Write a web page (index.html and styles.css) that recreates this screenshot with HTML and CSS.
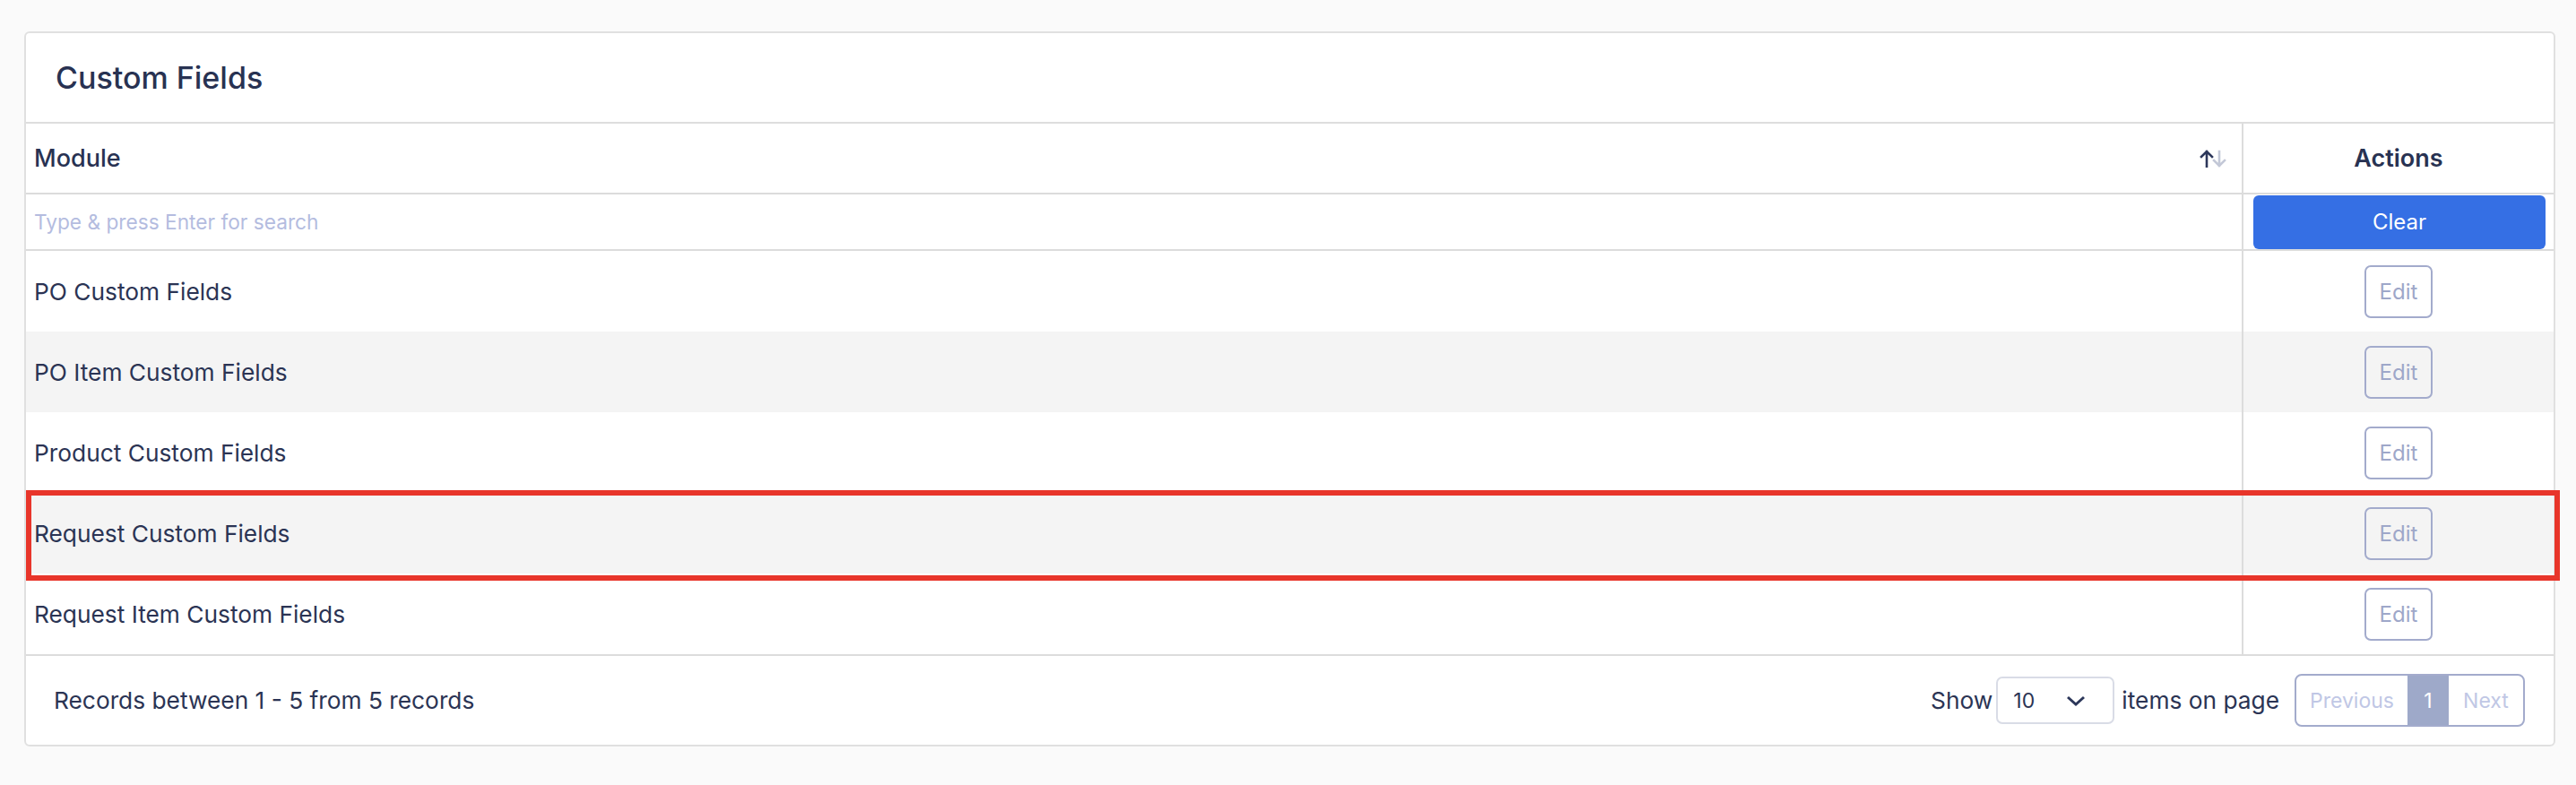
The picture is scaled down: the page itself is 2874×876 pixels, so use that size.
FILE: index.html
```html
<!DOCTYPE html>
<html lang="en">
<head>
    <meta charset="UTF-8">
    <meta name="viewport" content="width=device-width, initial-scale=1.0">
    <title>Custom Fields</title>
    <link rel="stylesheet" href="styles.css">
</head>
<body>
    <div class="card">
        <div class="card-head">
            <h1>Custom Fields</h1>
        </div>

        <div class="grid">
            <div class="row head-row">
                <div class="cell">
                    <span>Module</span>
                    <svg class="sort" width="30" height="20" viewBox="0 0 30 20">
                        <g fill="none" stroke-width="2.6" stroke-linecap="square">
                            <path d="M22 2v16M16 12l6 6 6-6" stroke="#c3c8d7"/>
                            <path d="M8 2v17M2 8l6-6 6 6" stroke="#2c375a"/>
                        </g>
                    </svg>
                </div>
                <div class="cell action">Actions</div>
            </div>

            <div class="row search-row">
                <div class="cell">
                    <input type="text" class="search" placeholder="Type &amp; press Enter for search">
                </div>
                <div class="cell action">
                    <button class="btn-clear">Clear</button>
                </div>
            </div>

            <div class="row item"><div class="cell">PO Custom Fields</div><div class="cell action"><button class="btn-edit">Edit</button></div></div>
            <div class="row item"><div class="cell">PO Item Custom Fields</div><div class="cell action"><button class="btn-edit">Edit</button></div></div>
            <div class="row item"><div class="cell">Product Custom Fields</div><div class="cell action"><button class="btn-edit">Edit</button></div></div>
            <div class="row item"><div class="cell">Request Custom Fields</div><div class="cell action"><button class="btn-edit">Edit</button></div></div>
            <div class="row item"><div class="cell">Request Item Custom Fields</div><div class="cell action"><button class="btn-edit">Edit</button></div></div>
        </div>

        <div class="card-foot">
            <span class="records">Records between 1 - 5 from 5 records</span>
            <div class="paging">
                <span>Show</span>
                <div class="select">
                    <span>10</span>
                    <svg width="22" height="12" viewBox="0 0 22 12">
                        <path d="M2 2l9 8 9-8" fill="none" stroke="#2c375a" stroke-width="3"/>
                    </svg>
                </div>
                <span>items on page</span>
                <div class="pager">
                    <span class="page-link prev">Previous</span>
                    <span class="page-link current">1</span>
                    <span class="page-link next">Next</span>
                </div>
            </div>
        </div>

        <!-- highlight box drawn over the fourth row -->
        <div class="highlight"></div>
    </div>
</body>
</html>
```

FILE: styles.css
```css
* {
    box-sizing: border-box;
}
body {
    margin: 0;
    padding: 35px 23px 43px 27px;
    background-color: #fafafa;
    font-family: Inter, "Noto Sans", sans-serif;
    color: #2b3454;
}
.card {
    position: relative;
    background-color: #fff;
    border: 2px solid #e0e0e0;
    border-radius: 6px;
}
.card-head {
    height: 101px;
    padding: 0 33px;
    display: flex;
    align-items: center;
    border-bottom: 2px solid #dddddd;
}
.card-head h1 {
    margin: 0;
    font-size: 34px;
    font-weight: 500;
    color: #283252;
}
.row {
    display: grid;
    grid-template-columns: 1fr 348px;
}
.cell {
    display: flex;
    align-items: center;
    padding: 0 9px;
    font-size: 26.3px;
}
.cell.action {
    justify-content: center;
    border-left: 2px solid #dcdcdc;
}
.head-row {
    height: 79px;
    border-bottom: 2px solid #dcdcdc;
}
.head-row .cell {
    font-size: 27px;
    font-weight: 500;
    color: #283252;
}
.head-row .cell.action {
    font-weight: 600;
}
.head-row .cell:first-child {
    justify-content: space-between;
    padding-right: 17px;
}
.search-row {
    height: 63px;
    border-bottom: 2px solid #dcdcdc;
}
.search {
    width: 100%;
    border: none;
    outline: none;
    padding: 0;
    font-family: inherit;
    font-size: 22.7px;
    color: #2b3454;
    background: transparent;
}
.search::placeholder {
    color: #b4bcdf;
}
.search-row .cell.action {
    padding: 0 9px 0 11px;
}
.btn-clear {
    width: 100%;
    height: 60px;
    border: none;
    border-radius: 6px;
    background-color: #356fe4;
    color: #fff;
    font-family: inherit;
    font-size: 24px;
    font-weight: 400;
}
.item {
    height: 90px;
}
.item:nth-child(even) {
    background-color: #f4f4f4;
}
.btn-edit {
    width: 76px;
    height: 59px;
    border: 2px solid #a3abcc;
    border-radius: 7px;
    background: transparent;
    color: #9ea7c9;
    font-family: inherit;
    font-size: 24px;
}
.card-foot {
    height: 101px;
    padding: 0 32px 0 31px;
    display: flex;
    align-items: center;
    justify-content: space-between;
    border-top: 2px solid #dcdcdc;
    font-size: 26.3px;
}
.paging {
    display: flex;
    align-items: center;
}
.select {
    width: 132px;
    height: 53px;
    margin: 0 8px 0 4px;
    padding: 0 30px 0 17px;
    display: flex;
    align-items: center;
    justify-content: space-between;
    border: 2px solid #d9dce6;
    border-radius: 7px;
    font-size: 23px;
}
.pager {
    display: flex;
    height: 59px;
    margin-left: 17px;
    border: 2px solid #a3abcc;
    border-radius: 8px;
    overflow: hidden;
}
.page-link {
    display: flex;
    align-items: center;
    justify-content: center;
    font-size: 23px;
    color: #c0c7e5;
}
.page-link.prev {
    width: 124px;
}
.page-link.current {
    width: 46px;
    background-color: #9ea9c9;
    color: #fff;
}
.page-link.next {
    width: 83px;
}
.highlight {
    position: absolute;
    left: 0;
    top: 510px;
    width: 2827px;
    height: 101px;
    border: 6px solid #e8352a;
    pointer-events: none;
}
```
